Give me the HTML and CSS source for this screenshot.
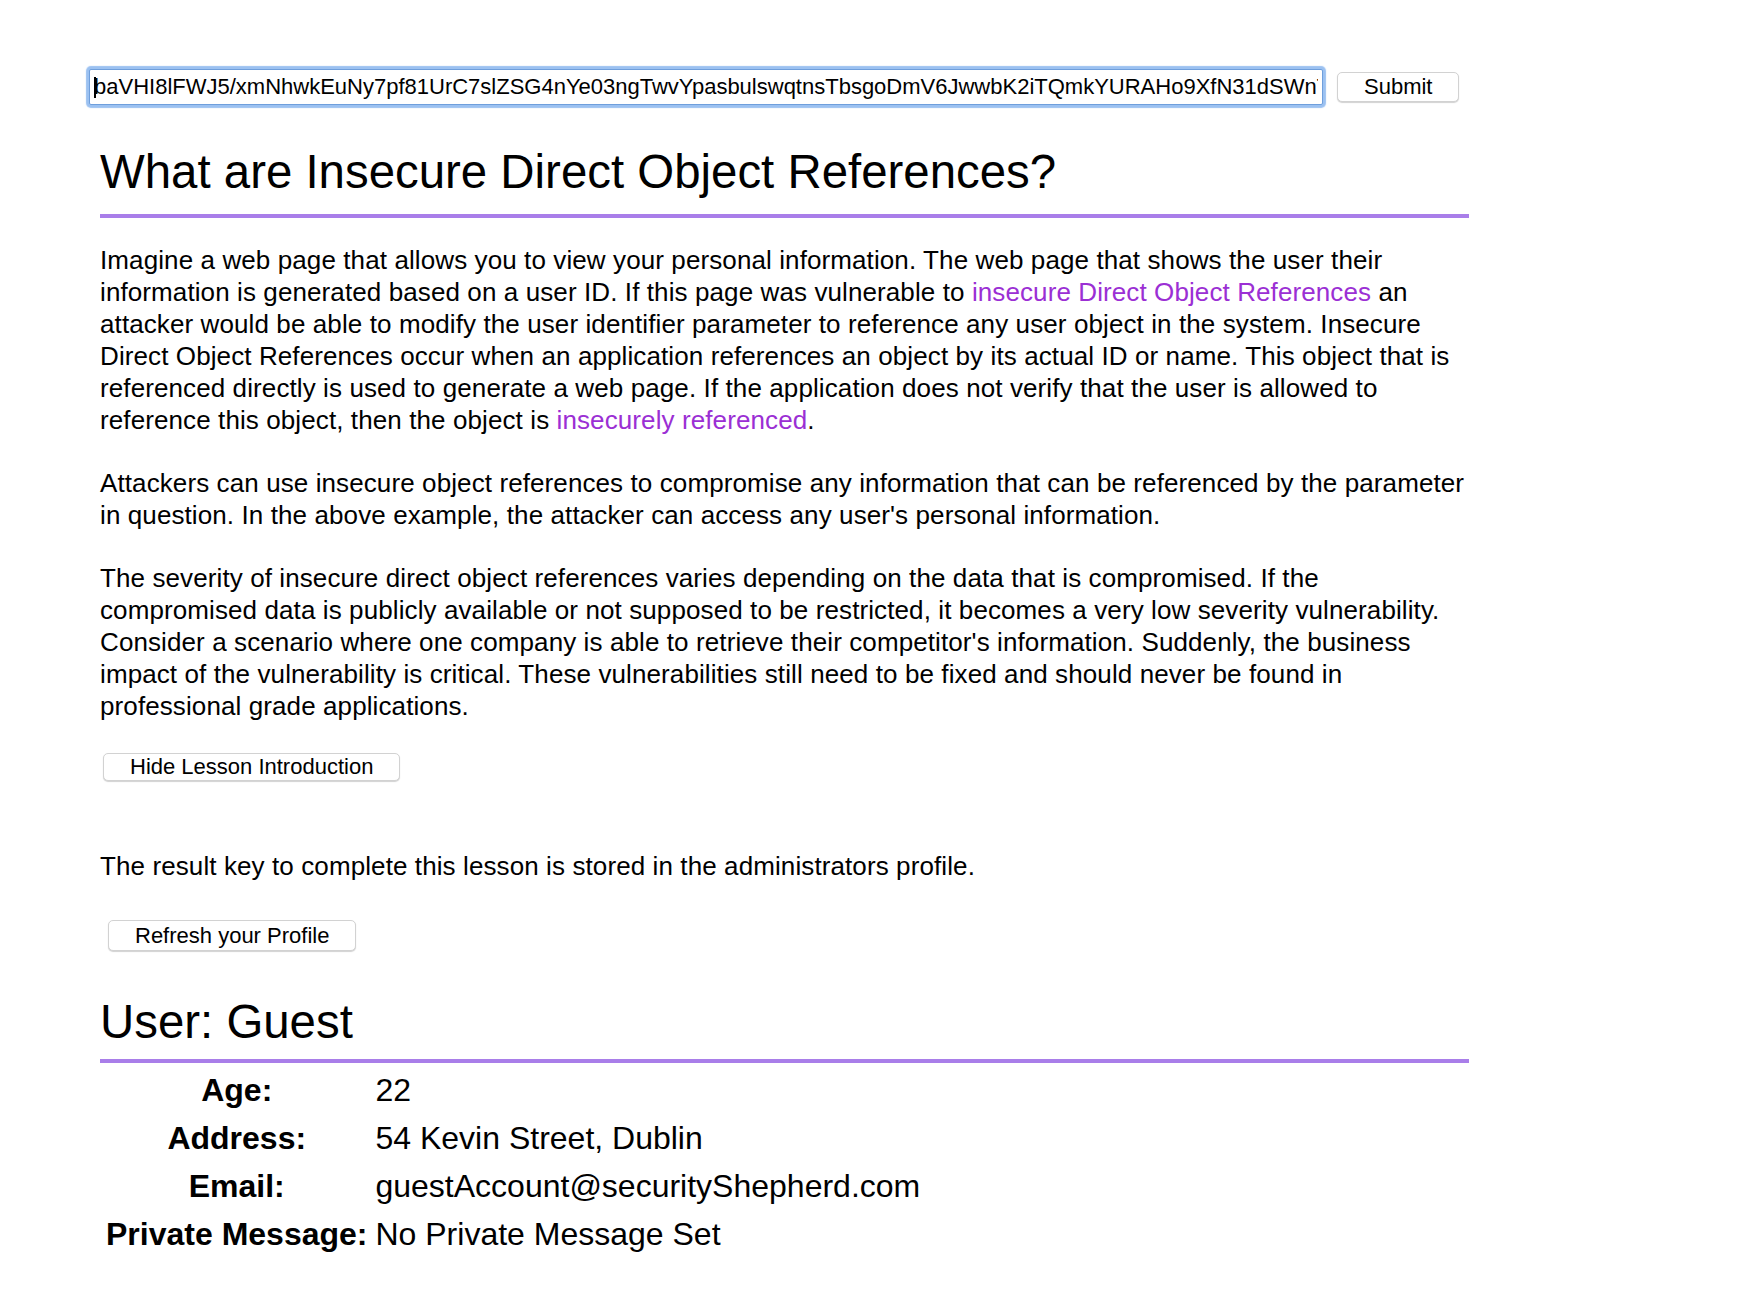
FILE: index.html
```html
<!DOCTYPE html>
<html lang="en">
<head>
<meta charset="utf-8">
<title>Insecure Direct Object References</title>
<link rel="stylesheet" href="styles.css">
</head>
<body>
<form class="keybar">
  <div class="field">
    <input class="key" type="text" value="baVHI8lFWJ5/xmNhwkEuNy7pf81UrC7slZSG4nYe03ngTwvYpasbulswqtnsTbsgoDmV6JwwbK2iTQmkYURAHo9XfN31dSWnT7qLmZpR0a4cVx2">
    <span class="caret"></span>
  </div>
  <button class="btn submit" type="button">Submit</button>
</form>
<main class="lesson">
  <h1 class="title">What are Insecure Direct Object References?</h1>
  <div class="intro">
    <p>Imagine a web page that allows you to view your personal information. The web page that shows the user their information is generated based on a user ID. If this page was vulnerable to <a class="link" href="#">insecure Direct Object References</a> an attacker would be able to modify the user identifier parameter to reference any user object in the system. Insecure Direct Object References occur when an application references an object by its actual ID or name. This object that is referenced directly is used to generate a web page. If the application does not verify that the user is allowed to reference this object, then the object is <a class="link" href="#">insecurely referenced</a>.</p>
    <p>Attackers can use insecure object references to compromise any information that can be referenced by the parameter in question. In the above example, the attacker can access any user's personal information.</p>
    <p>The severity of insecure direct object references varies depending on the data that is compromised. If the compromised data is publicly available or not supposed to be restricted, it becomes a very low severity vulnerability. Consider a scenario where one company is able to retrieve their competitor's information. Suddenly, the business impact of the vulnerability is critical. These vulnerabilities still need to be fixed and should never be found in professional grade applications.</p>
  </div>
  <button class="btn hide" type="button">Hide Lesson Introduction</button>
  <p class="result">The result key to complete this lesson is stored in the administrators profile.</p>
  <button class="btn refresh" type="button">Refresh your Profile</button>
  <h2 class="title user">User: Guest</h2>
  <div class="profile">
    <div class="label">Age:</div><div class="value">22</div>
    <div class="label">Address:</div><div class="value">54 Kevin Street, Dublin</div>
    <div class="label">Email:</div><div class="value">guestAccount@securityShepherd.com</div>
    <div class="label">Private Message:</div><div class="value">No Private Message Set</div>
  </div>
</main>
</body>
</html>
```
FILE: styles.css
```css
html, body {
  margin: 0;
  padding: 0;
  background: #ffffff;
}
body {
  font-family: "Liberation Sans", Arial, sans-serif;
  color: #000000;
  width: 1750px;
}
.keybar {
  display: flex;
  align-items: center;
  padding: 69px 0 0 89px;
  margin: 0;
}
.field {
  position: relative;
  width: 1234px;
  height: 36px;
}
.key {
  box-sizing: border-box;
  width: 100%;
  height: 36px;
  margin: 0;
  padding: 0 4px;
  border: 1px solid #6f9fdc;
  border-radius: 2px;
  box-shadow: 0 0 1px 3px rgba(122, 172, 236, 0.75);
  font-family: "Liberation Sans", Arial, sans-serif;
  font-size: 22px;
  color: #000;
  outline: none;
  background: #fff;
}
.caret {
  position: absolute;
  left: 5px;
  top: 8px;
  width: 2px;
  height: 21px;
  background: #000;
}
.btn {
  box-sizing: border-box;
  height: 30px;
  margin: 0;
  padding: 0 26px;
  font-family: "Liberation Sans", Arial, sans-serif;
  font-size: 22px;
  line-height: 1;
  color: #000;
  background: #ffffff;
  border: 1px solid #d2d2d2;
  border-radius: 5px;
  box-shadow: 0 1px 1px rgba(0, 0, 0, 0.18);
  cursor: pointer;
}
.submit {
  margin-left: 14px;
}
.lesson {
  display: block;
  margin: 0 0 0 100px;
  width: 1369px;
}
.title {
  margin: 0;
  font-size: 47.4px;
  font-weight: normal;
  line-height: 56px;
  letter-spacing: 0;
  border-bottom: 4px solid #a97ee9;
}
h1.title {
  margin-top: 39px;
  padding-bottom: 14px;
  margin-bottom: 26px;
}
.intro p {
  margin: 0 0 31px 0;
  font-size: 26px;
  line-height: 32px;
  letter-spacing: 0.1px;
}
.link {
  color: #9b2fd4;
  text-decoration: none;
}
.hide {
  display: block;
  height: 28px;
  margin: 0 0 0 3px;
}
.result {
  margin: 69px 0 0 0;
  font-size: 26px;
  line-height: 32px;
  letter-spacing: 0.1px;
}
.refresh {
  display: block;
  height: 31px;
  margin: 38px 0 0 8px;
}
.user {
  margin-top: 43px;
  padding-bottom: 9px;
}
.profile {
  display: grid;
  grid-template-columns: auto 1fr;
  column-gap: 8px;
  margin: 3px 0 0 6px;
}
.label {
  font-size: 32px;
  font-weight: bold;
  line-height: 48px;
  text-align: center;
}
.value {
  font-size: 32px;
  line-height: 48px;
}
```
